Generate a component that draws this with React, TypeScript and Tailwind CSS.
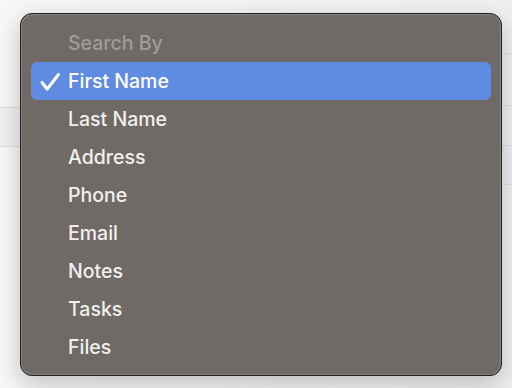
const items = ["First Name", "Last Name", "Address", "Phone", "Email", "Notes", "Tasks", "Files"];

function Backdrop() {
  return (
    <div className="flex h-full w-full bg-gradient-to-r from-[#f7f7f7] to-[#efefef]">
      <div className="flex-1">
        <div className="h-[107px]" />
        <div className="h-[40px] border-y border-[#dedee0] bg-[#f0f0f2]" />
      </div>
      <div className="flex-1">
        <div className="h-[53px]" />
        <div className="ml-auto h-[53px] w-[20px] border-y border-[#e2e2e2]" />
        <div className="h-[39px]" />
        <div className="h-[40px] border-y border-[#e2e2e4] bg-[#ededef]" />
      </div>
    </div>
  );
}

function Tick() {
  return (
    <svg width="22" height="20" viewBox="0 0 22 20" fill="none">
      <path d="M3 10.5 L8.2 17 L19.5 2.5" stroke="white" strokeWidth="3" strokeLinecap="round" strokeLinejoin="round" />
    </svg>
  );
}

export default function App() {
  return (
    <div className="relative h-[388px] w-[512px] overflow-hidden" style={{ fontFamily: "Inter, 'Noto Sans', sans-serif" }}>
      <Backdrop />
      <div className="absolute left-[20px] top-[13px] w-[482px] rounded-[12px] border border-[#1e1e1e] bg-[#6f6a66] px-[10px] pb-[9px] pt-[10px] shadow-[inset_0_0_0_1px_rgba(255,255,255,0.18),0_8px_24px_rgba(0,0,0,0.22)]">
        <div className="flex h-[38px] items-center pl-[37px] pt-[2px] text-[19.5px] font-medium text-[#a19c98]">Search By</div>
        {items.map((item, i) => (
          <div
            key={item}
            className={
              i === 0
                ? "flex h-[38px] items-center rounded-[6px] bg-[#608be3] text-[19.5px] font-medium text-white"
                : "flex h-[38px] items-center text-[19.5px] font-medium text-[#f2f0ee]"
            }
          >
            <span className="flex w-[37px] justify-center pl-[1px] pt-[1px]">{i === 0 && <Tick />}</span>
            <span className="pt-[2px]">{item}</span>
          </div>
        ))}
      </div>
    </div>
  );
}
